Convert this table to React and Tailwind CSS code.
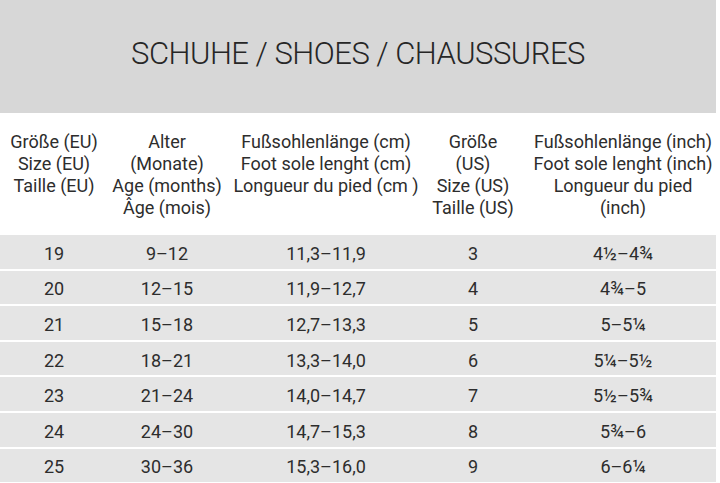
const rows = [
  ["19", "9–12", "11,3–11,9", "3", "4½–4¾"],
  ["20", "12–15", "11,9–12,7", "4", "4¾–5"],
  ["21", "15–18", "12,7–13,3", "5", "5–5¼"],
  ["22", "18–21", "13,3–14,0", "6", "5¼–5½"],
  ["23", "21–24", "14,0–14,7", "7", "5½–5¾"],
  ["24", "24–30", "14,7–15,3", "8", "5¾–6"],
  ["25", "30–36", "15,3–16,0", "9", "6–6¼"],
];

const cols = "grid grid-cols-[108px_118px_200px_94px_196px]";

export default function App() {
  return (
    <div
      className="w-[720px] h-[483px] overflow-hidden bg-white text-[#2d2d2d]"
      style={{ fontFamily: "Roboto, 'Liberation Sans', sans-serif" }}
    >
      <div className="w-[716px]">
        <div className="h-[113px] bg-[#d7d7d7] flex items-center justify-center pb-[4px]">
          <h1 className="text-[31px] font-light tracking-[-0.5px] text-[#262626]">
            SCHUHE / SHOES / CHAUSSURES
          </h1>
        </div>

        <div className={`${cols} h-[122px] pt-[18px] text-[18px] leading-[22px] text-center`}>
          <div>
            <p>Größe (EU)</p>
            <p>Size (EU)</p>
            <p>Taille (EU)</p>
          </div>
          <div>
            <p>Alter</p>
            <p>(Monate)</p>
            <p>Age (months)</p>
            <p>Âge (mois)</p>
          </div>
          <div>
            <p>Fußsohlenlänge (cm)</p>
            <p>Foot sole lenght (cm)</p>
            <p>Longueur du pied (cm )</p>
          </div>
          <div>
            <p>Größe</p>
            <p>(US)</p>
            <p>Size (US)</p>
            <p>Taille (US)</p>
          </div>
          <div className="pl-[10px]">
            <p>Fußsohlenlänge (inch)</p>
            <p>Foot sole lenght (inch)</p>
            <p>Longueur du pied</p>
            <p>(inch)</p>
          </div>
        </div>

        <div className="flex flex-col gap-[2px]">
          {rows.map((r) => (
            <div
              key={r[0]}
              className={`${cols} h-[33.6px] pt-[3px] items-center bg-[#e5e5e5] text-[18px] text-center`}
            >
              <span>{r[0]}</span>
              <span>{r[1]}</span>
              <span>{r[2]}</span>
              <span>{r[3]}</span>
              <span className="pl-[10px]">{r[4]}</span>
            </div>
          ))}
        </div>
      </div>
    </div>
  );
}
